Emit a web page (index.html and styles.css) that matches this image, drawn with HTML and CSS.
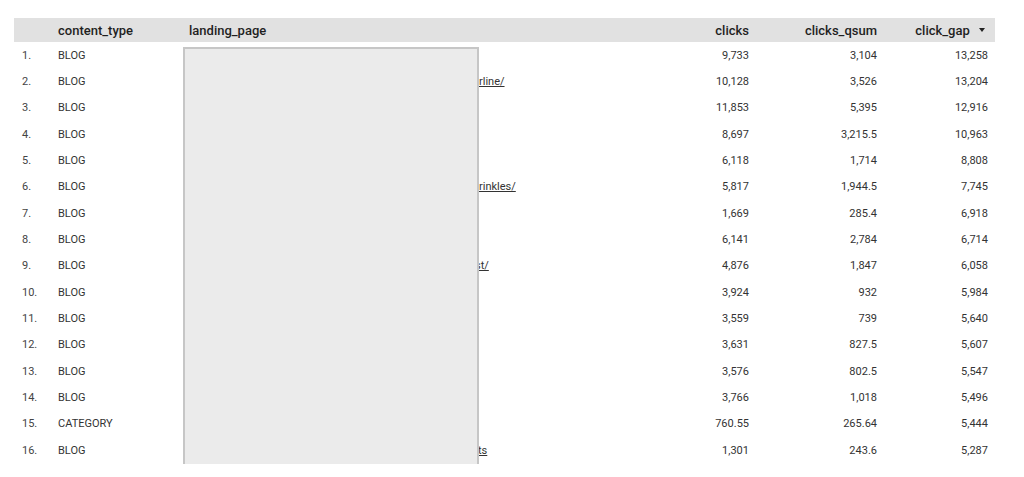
FILE: index.html
```html
<!DOCTYPE html>
<html>
<head>
<meta charset="utf-8">
<link rel="stylesheet" href="styles.css">
</head>
<body>
<div class="page">
  <div class="table">
    <div class="row head">
      <div class="c num"></div>
      <div class="c type">content_type</div>
      <div class="c lp">landing_page</div>
      <div class="c n">clicks</div>
      <div class="c n">clicks_qsum</div>
      <div class="c n gap">click_gap <span class="sort"></span></div>
    </div>
    <div class="row"><div class="c num">1.</div><div class="c type">BLOG</div><div class="c lp"></div><div class="c n">9,733</div><div class="c n">3,104</div><div class="c n last">13,258</div></div>
    <div class="row"><div class="c num">2.</div><div class="c type">BLOG</div><div class="c lp"><a class="frag f1" href="#">rline/</a></div><div class="c n">10,128</div><div class="c n">3,526</div><div class="c n last">13,204</div></div>
    <div class="row"><div class="c num">3.</div><div class="c type">BLOG</div><div class="c lp"></div><div class="c n">11,853</div><div class="c n">5,395</div><div class="c n last">12,916</div></div>
    <div class="row"><div class="c num">4.</div><div class="c type">BLOG</div><div class="c lp"></div><div class="c n">8,697</div><div class="c n">3,215.5</div><div class="c n last">10,963</div></div>
    <div class="row"><div class="c num">5.</div><div class="c type">BLOG</div><div class="c lp"></div><div class="c n">6,118</div><div class="c n">1,714</div><div class="c n last">8,808</div></div>
    <div class="row"><div class="c num">6.</div><div class="c type">BLOG</div><div class="c lp"><a class="frag f1" href="#">rinkles/</a></div><div class="c n">5,817</div><div class="c n">1,944.5</div><div class="c n last">7,745</div></div>
    <div class="row"><div class="c num">7.</div><div class="c type">BLOG</div><div class="c lp"></div><div class="c n">1,669</div><div class="c n">285.4</div><div class="c n last">6,918</div></div>
    <div class="row"><div class="c num">8.</div><div class="c type">BLOG</div><div class="c lp"></div><div class="c n">6,141</div><div class="c n">2,784</div><div class="c n last">6,714</div></div>
    <div class="row"><div class="c num">9.</div><div class="c type">BLOG</div><div class="c lp"><a class="frag f2" href="#">st/</a></div><div class="c n">4,876</div><div class="c n">1,847</div><div class="c n last">6,058</div></div>
    <div class="row"><div class="c num">10.</div><div class="c type">BLOG</div><div class="c lp"></div><div class="c n">3,924</div><div class="c n">932</div><div class="c n last">5,984</div></div>
    <div class="row"><div class="c num">11.</div><div class="c type">BLOG</div><div class="c lp"></div><div class="c n">3,559</div><div class="c n">739</div><div class="c n last">5,640</div></div>
    <div class="row"><div class="c num">12.</div><div class="c type">BLOG</div><div class="c lp"></div><div class="c n">3,631</div><div class="c n">827.5</div><div class="c n last">5,607</div></div>
    <div class="row"><div class="c num">13.</div><div class="c type">BLOG</div><div class="c lp"></div><div class="c n">3,576</div><div class="c n">802.5</div><div class="c n last">5,547</div></div>
    <div class="row"><div class="c num">14.</div><div class="c type">BLOG</div><div class="c lp"></div><div class="c n">3,766</div><div class="c n">1,018</div><div class="c n last">5,496</div></div>
    <div class="row"><div class="c num">15.</div><div class="c type">CATEGORY</div><div class="c lp"></div><div class="c n">760.55</div><div class="c n">265.64</div><div class="c n last">5,444</div></div>
    <div class="row"><div class="c num">16.</div><div class="c type">BLOG</div><div class="c lp"><a class="frag f3" href="#">ts</a></div><div class="c n">1,301</div><div class="c n">243.6</div><div class="c n last">5,287</div></div>
    <div class="redact"></div>
  </div>
</div>
</body>
</html>
```
FILE: styles.css
```css
html, body {
  margin: 0;
  padding: 0;
  background: #ffffff;
}
.page {
  padding: 18px 0 0 14px;
  font-family: Roboto, "Liberation Sans", sans-serif;
}
.table {
  position: relative;
  width: 981px;
  height: 446px;
  overflow: hidden;
}
.row {
  display: grid;
  grid-template-columns: 44px 131px 451px 109px 128px 118px;
  height: 26.33px;
  align-items: center;
  font-size: 11px;
  color: #333333;
}
.row.head {
  height: 24px;
  background: #e1e1e1;
  font-size: 13px;
  font-weight: 500;
  color: #1f1f1f;
}
.c {
  white-space: nowrap;
}
.num {
  padding-left: 8px;
  color: #444444;
}
.n {
  text-align: right;
}
.last {
  padding-right: 7px;
}
.head .gap {
  padding-right: 10px;
}
.sort {
  display: inline-block;
  width: 0;
  height: 0;
  margin-left: 6px;
  border-left: 3px solid transparent;
  border-right: 3px solid transparent;
  border-top: 4px solid #222222;
  vertical-align: middle;
  position: relative;
  top: -1px;
}
.frag {
  color: #333333;
  text-decoration: underline;
  display: inline-block;
}
.f1 { padding-left: 290px; }
.f2 { padding-left: 286px; }
.f3 { padding-left: 289px; }
.redact {
  position: absolute;
  left: 169px;
  top: 29px;
  width: 292px;
  height: 417px;
  background: #ebebeb;
  border: 2px solid #c6c6c6;
  border-bottom: none;
}
```
